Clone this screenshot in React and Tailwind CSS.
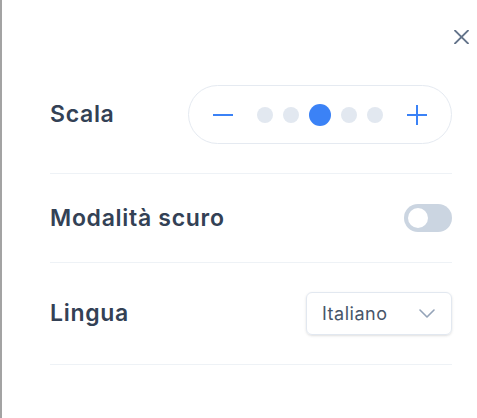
import React, { useState } from 'react';

const font = { fontFamily: 'Inter, "Noto Sans", sans-serif' };

function Row({ label, children, className = '' }) {
  return (
    <div className={`flex items-center justify-between border-b border-[#eef2f6] ${className}`}>
      <span className="text-[23px] leading-none font-semibold text-[#334155] tracking-[0.7px]">{label}</span>
      {children}
    </div>
  );
}

function ScaleControl({ value, onChange }) {
  const steps = [0, 1, 2, 3, 4];
  return (
    <div className="flex items-center h-[59px] w-[264px] px-6 rounded-full border border-[#e5eaf1] justify-between">
      <button
        onClick={() => onChange(Math.max(0, value - 1))}
        className="w-5 h-5 flex items-center justify-center"
      >
        <svg width="20" height="20" viewBox="0 0 20 20">
          <path d="M0 10h20" stroke="#3b82f6" strokeWidth="2" />
        </svg>
      </button>
      <div className="flex items-center gap-[10px]">
        {steps.map((s) => (
          <span
            key={s}
            className={
              s === value
                ? 'w-[22px] h-[22px] rounded-full bg-[#3b82f6]'
                : 'w-4 h-4 rounded-full bg-[#e2e8f0]'
            }
          />
        ))}
      </div>
      <button
        onClick={() => onChange(Math.min(4, value + 1))}
        className="w-5 h-5 flex items-center justify-center"
      >
        <svg width="20" height="20" viewBox="0 0 20 20">
          <path d="M0 10h20M10 0v20" stroke="#3b82f6" strokeWidth="2" />
        </svg>
      </button>
    </div>
  );
}

export default function App() {
  const [scale, setScale] = useState(2);
  const [dark, setDark] = useState(false);

  return (
    <div className="w-[477px] h-[418px] bg-white border-l-2 border-[#a3a3a3] flex flex-col" style={font}>
      <div className="h-[56px] flex justify-end pt-[30px] pr-2">
        <button className="w-[15px] h-[14px]">
          <svg width="15" height="14" viewBox="0 0 15 14">
            <path d="M1 0.5l13 13M14 0.5l-13 13" stroke="#64748b" strokeWidth="1.8" strokeLinecap="round" />
          </svg>
        </button>
      </div>
      <div className="pl-12 pr-[25px] flex flex-col">
        <Row label="Scala" className="py-[29px]">
          <ScaleControl value={scale} onChange={setScale} />
        </Row>
        <Row label="Modalità scuro" className="py-[30px]">
          <button
            onClick={() => setDark(!dark)}
            className={`w-12 h-7 rounded-full flex items-center px-1 ${dark ? 'bg-[#3b82f6] justify-end' : 'bg-[#cbd5e1] justify-start'}`}
          >
            <span className="w-5 h-5 rounded-full bg-white" />
          </button>
        </Row>
        <Row label="Lingua" className="py-[29px]">
          <div className="w-[146px] h-[43px] rounded-md border border-[#e2e8f0] shadow-sm flex items-center justify-between pl-[15px] pr-4">
            <span className="text-[18px] tracking-[0.5px] text-[#475569]">Italiano</span>
            <svg width="16" height="9" viewBox="0 0 16 9">
              <path d="M1 1l7 7 7-7" fill="none" stroke="#94a3b8" strokeWidth="1.6" strokeLinecap="round" strokeLinejoin="round" />
            </svg>
          </div>
        </Row>
      </div>
    </div>
  );
}
